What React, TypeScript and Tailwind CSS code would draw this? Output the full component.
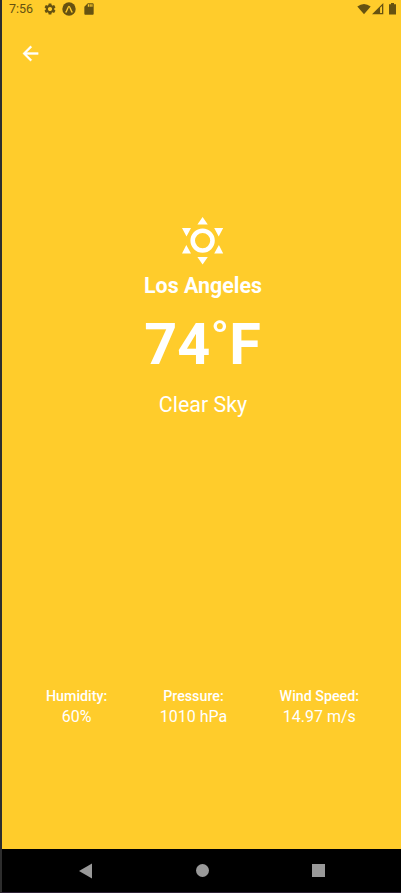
import React from 'react';

function StatusBar() {
  return (
    <div className="flex h-[18px] items-center justify-between pl-[7px] pr-[4px] text-[#665211]">
      <div className="flex items-center">
        <span className="w-[33px] text-[12.5px] leading-[18px]">7:56</span>
        <svg className="ml-px size-[14px]" viewBox="0 0 24 24" fill="currentColor">
          <path d="M19.14 12.94c.04-.3.06-.61.06-.94 0-.32-.02-.64-.07-.94l2.03-1.58c.18-.14.23-.41.12-.61l-1.92-3.32c-.12-.22-.37-.29-.59-.22l-2.39.96c-.5-.38-1.03-.7-1.62-.94l-.36-2.54c-.04-.24-.24-.41-.48-.41h-3.84c-.24 0-.43.17-.47.41l-.36 2.54c-.59.24-1.13.57-1.62.94l-2.39-.96c-.22-.08-.47 0-.59.22L2.74 8.87c-.12.21-.08.47.12.61l2.03 1.58c-.05.3-.09.63-.09.94s.02.64.07.94l-2.03 1.58c-.18.14-.23.41-.12.61l1.92 3.32c.12.22.37.29.59.22l2.39-.96c.5.38 1.03.7 1.62.94l.36 2.54c.05.24.24.41.48.41h3.84c.24 0 .44-.17.47-.41l.36-2.54c.59-.24 1.13-.56 1.62-.94l2.39.96c.22.08.47 0 .59-.22l1.92-3.32c.12-.22.07-.47-.12-.61l-2.01-1.58zM12 15.6c-1.98 0-3.6-1.62-3.6-3.6s1.62-3.6 3.6-3.6 3.6 1.62 3.6 3.6-1.62 3.6-3.6 3.6z" />
        </svg>
        <svg className="ml-[5px] size-[14px]" viewBox="0 0 14 14">
          <circle cx="7" cy="7" r="6.7" fill="currentColor" />
          <path d="M4 10 C5.4 8.2 6 4.4 7 4.4 C8 4.4 8.6 8.2 10 10" fill="none" stroke="#ffcc2b" strokeWidth="1.4" strokeLinecap="round" />
        </svg>
        <svg className="ml-[6px] size-[14px]" viewBox="0 0 24 24" fill="currentColor">
          <path d="M18 2h-8L4.02 8 4 20c0 1.1.9 2 2 2h12c1.1 0 2-.9 2-2V4c0-1.1-.9-2-2-2zm-6 6h-2V4h2v4zm3 0h-2V4h2v4zm3 0h-2V4h2v4z" />
        </svg>
      </div>
      <div className="flex items-center">
        <svg className="h-[12px] w-[14px]" viewBox="0 0 14 12">
          <path d="M0.3 3.5 Q7 -1.6 13.7 3.5 L7 11.3 Z" fill="currentColor" />
        </svg>
        <svg className="ml-px h-[12px] w-[12px]" viewBox="0 0 12 12">
          <path fillRule="evenodd" d="M0 11.3 L11.3 0 V11.3 Z M8.1 4.7 V10 H10 V3 Z" fill="currentColor" />
        </svg>
        <svg className="ml-[5px] mr-px h-[12px] w-[7px]" viewBox="0 0 7 12">
          <path d="M0 1.3 H2 V0 H5 V1.3 H7 V11.5 H0 Z" fill="currentColor" />
        </svg>
      </div>
    </div>
  );
}

function SunIcon() {
  return (
    <svg className="mr-px h-[48px] w-[42px]" viewBox="0.4 0 42 48" fill="white">
      <circle cx="21" cy="23.6" r="9.9" fill="none" stroke="white" strokeWidth="4.6" />
      <path d="M21 0 L26.2 7.6 H15.8 Z M21 47.6 L26.2 40 H15.8 Z" />
      <path d="M0.4 11 H9.4 L4.9 19.6 Z M0.4 36.4 L4.7 28 L9.4 36.4 Z" />
      <path d="M41.6 11 H32.6 L37.1 19.6 Z M41.6 36.4 L37.3 28 L32.6 36.4 Z" />
    </svg>
  );
}

const stats = [
  { label: 'Humidity:', value: '60%' },
  { label: 'Pressure:', value: '1010 hPa' },
  { label: 'Wind Speed:', value: '14.97 m/s' },
];

export default function App() {
  return (
    <div className="flex h-[893px] w-[401px] flex-col overflow-hidden border-b border-l-2 border-b-[#2c2035] border-l-[#2d2d2d] bg-[#ffcc2b] font-['Roboto',sans-serif] text-white">
      <StatusBar />
      <header className="flex h-[72px] items-center pb-px pl-[17px]">
        <svg className="size-[23px]" viewBox="0 0 24 24" fill="white" stroke="white" strokeWidth="0.4">
          <path d="M20 11H7.83l5.59-5.59L12 4l-8 8 8 8 1.41-1.41L7.83 13H20v-2z" />
        </svg>
      </header>
      <main className="flex flex-1 flex-col">
        <section className="flex h-[597px] flex-col items-center pl-[3px] pt-[127px]">
          <SunIcon />
          <h1 className="mt-[7px] whitespace-nowrap text-[21.4px] font-bold leading-[28px]">Los Angeles</h1>
          <p className="mr-px mt-[11px] whitespace-nowrap text-[57.5px] font-bold leading-[68px]">74˚F</p>
          <p className="mt-[12px] whitespace-nowrap text-[21.4px] leading-[28px]">Clear Sky</p>
        </section>
        <section className="flex justify-between pl-[44px] pr-[42px]">
          {stats.map((s) => (
            <div key={s.label} className="flex flex-col items-center whitespace-nowrap">
              <span className="text-[14.25px] font-medium leading-[18px]">{s.label}</span>
              <span className="mt-[2px] text-[16px] leading-[20px]">{s.value}</span>
            </div>
          ))}
        </section>
      </main>
      <nav className="flex h-[43px] items-center bg-black pl-[77px]">
        <svg className="h-[16px] w-[13px]" viewBox="0 0 13 16">
          <path d="M0 8 L13 0.5 V15.5 Z" fill="#999" />
        </svg>
        <span className="ml-[104px] size-[13px] rounded-full bg-[#999]" />
        <span className="ml-[103px] size-[13px] bg-[#999]" />
      </nav>
    </div>
  );
}
